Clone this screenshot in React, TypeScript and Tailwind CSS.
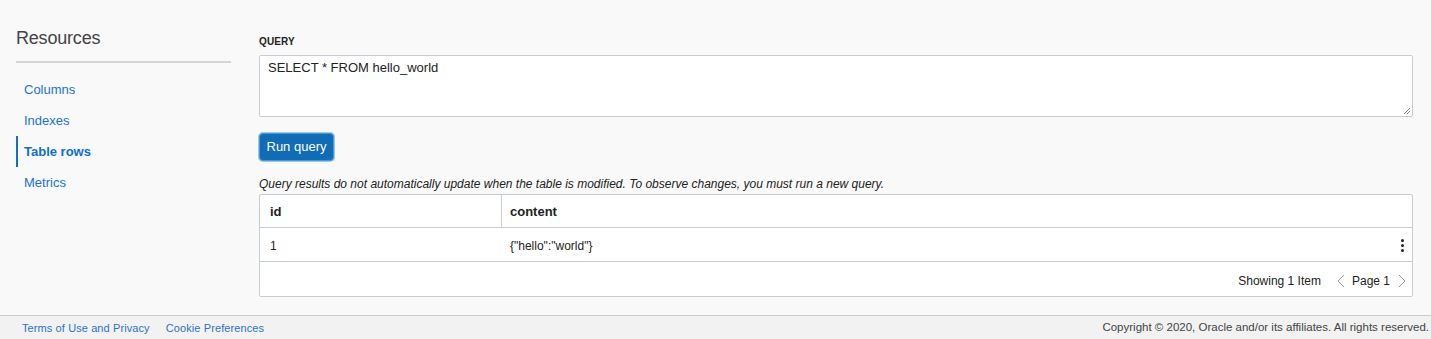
import React from "react";

export default function App() {
  const font = { fontFamily: '"Liberation Sans", Arial, sans-serif' };
  return (
    <div className="w-[1431px] h-[339px] bg-[#f9f9f9] flex flex-col overflow-hidden" style={font}>
      <div className="flex flex-1 pl-4 pr-[18px]">
        <aside className="w-[215px] shrink-0 pt-[26px]">
          <div className="text-[18px] leading-[24px] text-[#444] font-light tracking-[-0.2px]">Resources</div>
          <div className="mt-[11px] h-[2px] bg-[#d3d6d9]" />
          <nav className="mt-[11px] flex flex-col text-[13px]">
            {["Columns", "Indexes", "Table rows", "Metrics"].map((t) => (
              <div
                key={t}
                className={
                  "h-[31px] flex items-center pl-[6px] border-l-2 " +
                  (t === "Table rows"
                    ? "border-[#0d6fd0] text-[#0d6fd0] font-bold"
                    : "border-transparent text-[#1a73d1]")
                }
              >
                {t}
              </div>
            ))}
          </nav>
        </aside>
        <main className="ml-[28px] flex-1 pt-[36px]">
          <div className="text-[10px] leading-[12px] font-bold text-[#222] tracking-[0.1px]">QUERY</div>
          <div className="relative mt-[7px] h-[62px] bg-white border border-[#c5ccd3] rounded-[2px] px-[8px] pt-[2px] text-[13px] text-[#222]">
            SELECT * FROM hello_world
            <svg className="absolute right-[1px] bottom-[1px]" width="9" height="9" viewBox="0 0 9 9">
              <path d="M8 2 L2 8 M8 5 L5 8" stroke="#888" strokeWidth="1" />
            </svg>
          </div>
          <button className="mt-[16px] h-[28px] w-[75px] rounded-[4px] bg-[#0f6cb5] border border-[#4a98d8] text-white text-[13px] font-normal shadow-[0_0_0_1px_#9cc6ea]">
            Run query
          </button>
          <div className="mt-[16px] text-[12px] italic text-[#222] leading-[14px]">
            Query results do not automatically update when the table is modified. To observe changes, you must run a new query.
          </div>
          <div className="mt-[3px] border border-[#c5ccd3] rounded-[2px] bg-white text-[12px] text-[#222]">
            <div className="flex h-[33px] border-b border-[#c5ccd3] font-bold text-[13px]">
              <div className="w-[242px] border-r border-[#c5ccd3] flex items-center pl-[10px] pt-[1px]">id</div>
              <div className="flex-1 flex items-center pl-[8px] pt-[1px]">content</div>
            </div>
            <div className="flex h-[34px] border-b border-[#c5ccd3]">
              <div className="w-[242px] flex items-center pl-[10px] pt-[2px]">1</div>
              <div className="flex-1 flex items-center pl-[8px] pt-[2px]">{'{"hello":"world"}'}</div>
              <div className="w-[20px] flex flex-col items-center justify-center gap-[2px] pt-[2px]">
                <span className="w-[3px] h-[3px] bg-[#222] rounded-full" />
                <span className="w-[3px] h-[3px] bg-[#222] rounded-full" />
                <span className="w-[3px] h-[3px] bg-[#222] rounded-full" />
              </div>
            </div>
            <div className="flex h-[34px] items-center justify-end pr-[6px] pt-[3px] text-[12px]">
              <span>Showing 1 Item</span>
              <svg className="ml-[16px]" width="8" height="14" viewBox="0 0 8 14">
                <path d="M7 1 L1 7 L7 13" fill="none" stroke="#999" strokeWidth="1" />
              </svg>
              <span className="ml-[7px]">Page 1</span>
              <svg className="ml-[8px]" width="8" height="14" viewBox="0 0 8 14">
                <path d="M1 1 L7 7 L1 13" fill="none" stroke="#999" strokeWidth="1" />
              </svg>
            </div>
          </div>
        </main>
      </div>
      <footer className="h-[24px] border-t border-[#c9ccd0] bg-[#f2f2f2] flex items-center justify-between pl-[22px] pr-[2px] pt-[1px] text-[11px]">
        <div className="flex gap-[16px] text-[#2a72c6] tracking-[0.1px]">
          <span>Terms of Use and Privacy</span>
          <span>Cookie Preferences</span>
        </div>
        <div className="text-[#444] text-[11.5px]">Copyright © 2020, Oracle and/or its affiliates. All rights reserved.</div>
      </footer>
    </div>
  );
}
